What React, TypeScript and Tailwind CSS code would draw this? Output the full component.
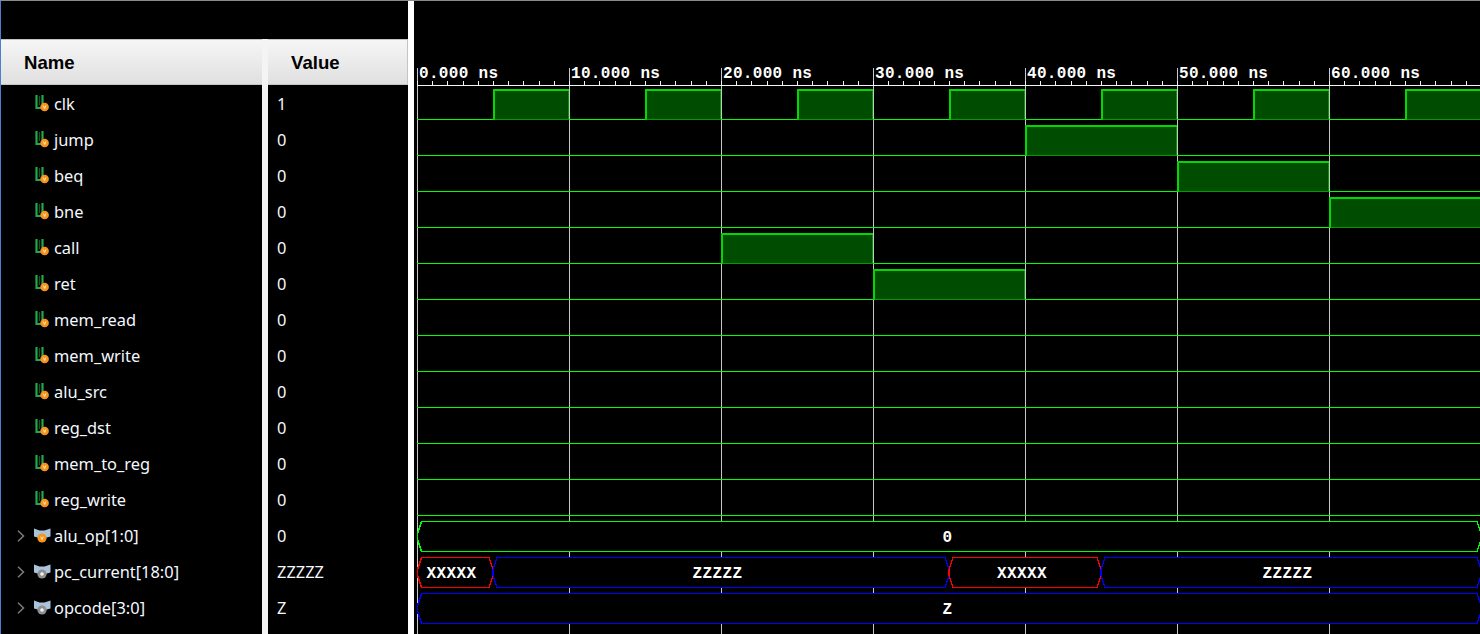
const signals = [
  { name: "clk", value: "1" },
  { name: "jump", value: "0" },
  { name: "beq", value: "0" },
  { name: "bne", value: "0" },
  { name: "call", value: "0" },
  { name: "ret", value: "0" },
  { name: "mem_read", value: "0" },
  { name: "mem_write", value: "0" },
  { name: "alu_src", value: "0" },
  { name: "reg_dst", value: "0" },
  { name: "mem_to_reg", value: "0" },
  { name: "reg_write", value: "0" },
  { name: "alu_op[1:0]", value: "0", bus: "#f7941d" },
  { name: "pc_current[18:0]", value: "ZZZZZ", bus: "#8f8f8f" },
  { name: "opcode[3:0]", value: "Z", bus: "#8f8f8f" },
];

const highs: [number, number, number][] = [
  [0, 493, 569], [0, 645, 721], [0, 797, 873], [0, 949, 1025], [0, 1101, 1177], [0, 1253, 1329], [0, 1405, 1481],
  [1, 1025, 1177],
  [2, 1177, 1329],
  [3, 1329, 1482],
  [4, 721, 873],
  [5, 873, 1025],
];

const buses: { row: number; x0: number; x1: number; color: string; label: string; cx: number }[] = [
  { row: 0, x0: 417.5, x1: 1481, color: "#00ff00", label: "0", cx: 947.5 },
  { row: 1, x0: 417.5, x1: 493, color: "#ff0000", label: "XXXXX", cx: 451.5 },
  { row: 1, x0: 493, x1: 949, color: "#0000ff", label: "ZZZZZ", cx: 717.5 },
  { row: 1, x0: 949, x1: 1101, color: "#ff0000", label: "XXXXX", cx: 1022 },
  { row: 1, x0: 1101, x1: 1481, color: "#0000ff", label: "ZZZZZ", cx: 1287.5 },
  { row: 2, x0: 417.5, x1: 1481, color: "#0000ff", label: "Z", cx: 947.5 },
];

const rulerLabels = ["0.000 ns", "10.000 ns", "20.000 ns", "30.000 ns", "40.000 ns", "50.000 ns", "60.000 ns"];
const mono = "'Liberation Mono', monospace";

function ScalarIcon() {
  return (
    <svg width="17" height="18" viewBox="0 0 17 18" className="shrink-0">
      <path d="M2.5 0V13H7" fill="none" stroke="#22a84a" strokeWidth="2.2" />
      <path d="M8.5 0V9" fill="none" stroke="#22a84a" strokeWidth="2.2" />
      <path d="M5.5 1V10" fill="none" stroke="#0f5a26" strokeWidth="1.2" />
      <circle cx="10.6" cy="12" r="4.3" fill="#f7941d" />
      <path d="M9.4 10.6L10.6 13.4L11.8 10.6" fill="none" stroke="#fff2d0" strokeWidth="0.9" />
    </svg>
  );
}

function BusIcon({ color, orange }: { color: string; orange: boolean }) {
  return (
    <svg width="17" height="16" viewBox="0 0 17 16" className="shrink-0">
      <path d="M0 0.5L5.5 2.5H10.5L16.5 0.5V8.5L11 10H5.5L0 8.5Z" fill="#a9c4dc" />
      <circle cx="8" cy="10" r="4.6" fill={color} />
      {orange ? (
        <path d="M6.7 8.6L8 11.6L9.3 8.6" fill="none" stroke="#fff2d0" strokeWidth="0.9" />
      ) : (
        <circle cx="8" cy="10" r="1.8" fill="#f2f2f2" />
      )}
    </svg>
  );
}

function Chevron() {
  return (
    <svg width="8" height="12" viewBox="0 0 8 12" className="shrink-0">
      <path d="M1 0.8L6.5 6L1 11.2" fill="none" stroke="#7c7c7c" strokeWidth="1.5" />
    </svg>
  );
}

function ColumnHeader({ label, className }: { label: string; className: string }) {
  return (
    <div
      className={`flex h-[46px] shrink-0 items-center border-y border-[#c4c4c4] bg-gradient-to-b from-[#f6f6f6] to-[#e0e0e0] pt-px font-['Liberation_Sans',sans-serif] text-[18.6px] font-bold text-black ${className}`}
    >
      {label}
    </div>
  );
}

function Waves() {
  const ticks: number[] = [];
  for (let x = 417; x < 1480; x += 15.2) ticks.push(Math.round(x));
  return (
    <svg width="1066" height="634" viewBox="414 0 1066 634" className="block">
      {[417, 569, 721, 873, 1025, 1177, 1329].map((x) => (
        <path key={x} d={`M${x + 0.5} 68V634`} stroke="#c8c8c8" strokeWidth="1" shapeRendering="crispEdges" />
      ))}
      <path d="M417 85.5H1480" stroke="#f4f4f4" strokeWidth="1" shapeRendering="crispEdges" />
      {ticks.map((x) => (
        <path key={x} d={`M${x + 0.5} 81V85`} stroke="#f4f4f4" strokeWidth="1" shapeRendering="crispEdges" />
      ))}
      {rulerLabels.map((t, i) => (
        <text
          key={t}
          x={419 + i * 152}
          y={78}
          fill="#ffffff"
          fontFamily={mono}
          fontWeight="700"
          fontSize="16"
          letterSpacing="0.32"
        >
          {t}
        </text>
      ))}
      {Array.from({ length: 12 }, (_, i) => (
        <path key={i} d={`M417 ${119.5 + i * 36}H1480`} stroke="#00ff00" strokeWidth="1" shapeRendering="crispEdges" />
      ))}
      {highs.map(([row, x0, x1]) => {
        const top = 89 + row * 36;
        return (
          <g key={`${row}-${x0}`} shapeRendering="crispEdges">
            <rect x={x0 + 1} y={top} width={x1 - x0 - 1} height={31} fill="#004c00" />
            <path d={`M${x0 + 1} ${top + 31}V${top + 1}H${x1}`} fill="none" stroke="#00d800" strokeWidth="2" />
            <path d={`M${x0 + 2} ${top + 30.5}H${x1 - 0.5}V${top + 2}`} fill="none" stroke="#009a00" strokeWidth="1" />
          </g>
        );
      })}
      {buses.map((b) => {
        const top = 521.5 + b.row * 36;
        const bottom = top + 30;
        const mid = top + 15;
        return (
          <g key={`${b.row}-${b.x0}`}>
            <path
              d={`M${b.x0} ${mid - 3}L${b.x0 + 4} ${top}H${b.x1 - 4}L${b.x1} ${mid - 3}V${mid + 3}L${b.x1 - 4} ${bottom}H${b.x0 + 4}L${b.x0} ${mid + 3}Z`}
              fill="#000000"
              stroke={b.color}
              strokeWidth="1.3"
              shapeRendering="crispEdges"
            />
            <text
              x={b.cx}
              y={mid + 5.5}
              textAnchor="middle"
              fill="#ffffff"
              fontFamily={mono}
              fontWeight="700"
              fontSize="16"
              letterSpacing="0.4"
            >
              {b.label}
            </text>
          </g>
        );
      })}
    </svg>
  );
}

export default function App() {
  return (
    <div className="flex h-[634px] w-[1480px] overflow-hidden border-t border-[#8a8a8a] bg-black">
      <div className="flex w-[408px] shrink-0 flex-col border-l border-[#4d7fd0]">
        <div className="h-[38px] shrink-0" />
        <div className="flex min-h-0 flex-1">
          <div className="flex w-[261px] shrink-0 flex-col">
            <ColumnHeader label="Name" className="pl-[23px]" />
            <div className="flex flex-col pt-px">
              {signals.map((s) => (
                <div
                  key={s.name}
                  className="flex h-9 shrink-0 items-center font-['Noto_Sans',sans-serif] text-[16.4px] text-[#f4f8ff]"
                >
                  <div className="flex w-[33px] shrink-0 justify-end pr-[9px]">{s.bus ? <Chevron /> : null}</div>
                  <div className="flex w-5 shrink-0">
                    {s.bus ? <BusIcon color={s.bus} orange={s.bus === "#f7941d"} /> : <ScalarIcon />}
                  </div>
                  <span>{s.name}</span>
                </div>
              ))}
            </div>
          </div>
          <div className="w-[6px] shrink-0 bg-[#f4f4f4]" />
          <div className="flex min-w-0 flex-1 flex-col">
            <ColumnHeader label="Value" className="border-r pl-[23px]" />
            <div className="flex flex-col pt-px">
              {signals.map((s) => (
                <div
                  key={s.name}
                  className="flex h-9 shrink-0 items-center pl-[9px] font-['Noto_Sans',sans-serif] text-[16.4px] text-[#f4f8ff]"
                >
                  {s.value}
                </div>
              ))}
            </div>
          </div>
        </div>
      </div>
      <div className="w-[6px] shrink-0 bg-white" />
      <div className="min-w-0 flex-1 -mt-px">
        <Waves />
      </div>
    </div>
  );
}
